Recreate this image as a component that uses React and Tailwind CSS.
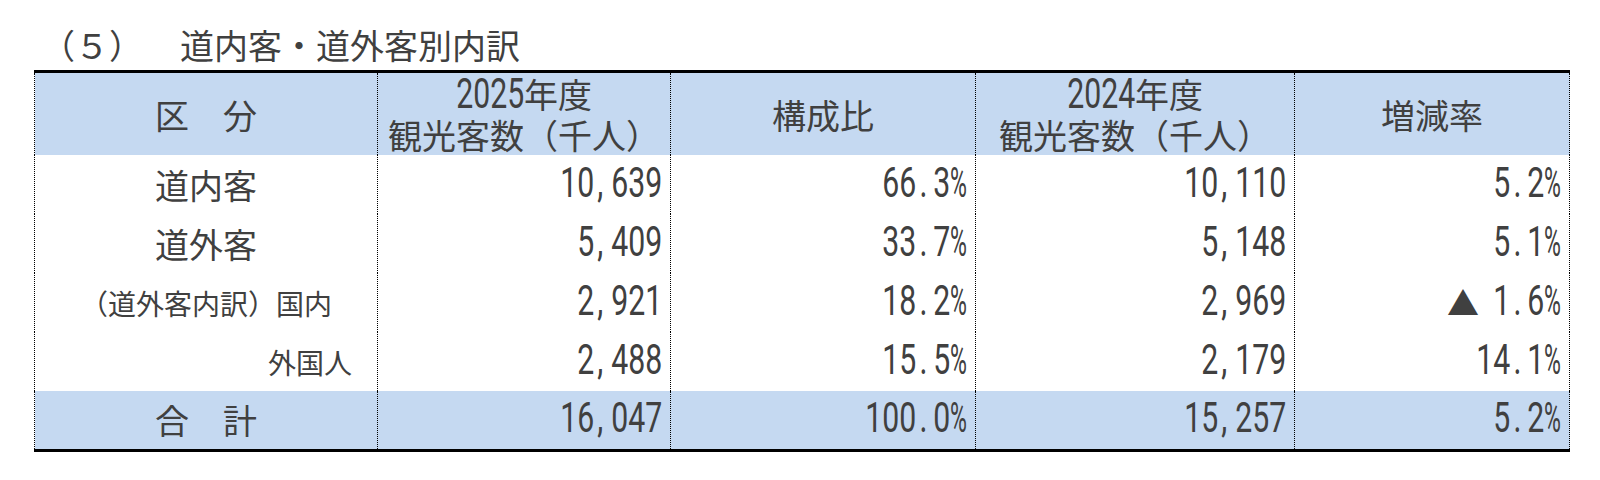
import React from "react";

const rows = [
  { label: "道内客", kind: "main", values: ["10,639", "66.3%", "10,110", "5.2%"] },
  { label: "道外客", kind: "main", values: ["5,409", "33.7%", "5,148", "5.1%"] },
  { label: "（道外客内訳）国内", kind: "sub", values: ["2,921", "18.2%", "2,969", "▲1.6%"] },
  { label: "外国人", kind: "subRight", values: ["2,488", "15.5%", "2,179", "14.1%"] },
];

const total = ["16,047", "100.0%", "15,257", "5.2%"];

// condensed monospace digits, each char gets its own 17px cell
function Num({ value }) {
  return (
    <span className="inline-flex font-['Roboto',sans-serif] text-[42px] leading-[30px]">
      {value.split("").map((c, i) => {
        if (c === "," || c === ".") {
          return (
            <span key={i} className="inline-flex w-[17px] justify-start pl-[2px]">
              <span className="inline-block scale-x-[0.72]">{c}</span>
            </span>
          );
        }
        return (
          <span key={i} className="inline-flex w-[17px] justify-center">
            <span className={c === "%" ? "inline-block scale-x-[0.55]" : "inline-block scale-x-[0.72]"}>{c}</span>
          </span>
        );
      })}
    </span>
  );
}

function Value({ value }) {
  if (value.startsWith("▲")) {
    return (
      <span className="inline-flex items-center">
        <span className="text-[32px] leading-[30px] mr-[14px]">▲</span>
        <Num value={value.slice(1)} />
      </span>
    );
  }
  return <Num value={value} />;
}

const cell = "border-x border-dotted border-black";

export default function App() {
  return (
    <div className="w-[1600px] h-[480px] bg-white pl-[34px] pr-[31px] font-['Noto_Sans_CJK_JP',sans-serif] text-[#404040]">

      <div className="h-[70px] pt-[26px] pl-[7px] text-[34px] leading-[38px] whitespace-nowrap">
        <span>（５）</span>
        <span className="ml-[37px]">道内客・道外客別内訳</span>
      </div>

      <table className="w-[1535px] table-fixed border-collapse border-y-[3px] border-black">
        <colgroup>
          <col className="w-[343px]" />
          <col className="w-[293px]" />
          <col className="w-[305px]" />
          <col className="w-[319px]" />
          <col className="w-[275px]" />
        </colgroup>

        <thead>
          <tr className="h-[82px] bg-[#c5d9f1] text-[34px] leading-[41px]">
            <th className={`${cell} font-normal`}>区　分</th>
            <th className={`${cell} font-normal`}>
              <div><Num value="2025" />年度</div>
              <div>観光客数（千人）</div>
            </th>
            <th className={`${cell} font-normal`}>構成比</th>
            <th className={`${cell} font-normal`}>
              <div><Num value="2024" />年度</div>
              <div>観光客数（千人）</div>
            </th>
            <th className={`${cell} font-normal`}>増減率</th>
          </tr>
        </thead>

        <tbody>
          {rows.map((row) => (
            <tr key={row.label} className="h-[59px]">
              <td
                className={
                  row.kind === "main"
                    ? `${cell} text-center text-[34px]`
                    : row.kind === "sub"
                    ? `${cell} text-center text-[28px]`
                    : `${cell} text-right pr-[25px] text-[28px]`
                }
              >
                {row.label}
              </td>
              {row.values.map((v, i) => (
                <td key={i} className={`${cell} text-right pr-[8px]`}>
                  <Value value={v} />
                </td>
              ))}
            </tr>
          ))}

          <tr className="h-[59px] bg-[#c5d9f1]">
            <td className={`${cell} text-center text-[34px]`}>合　計</td>
            {total.map((v, i) => (
              <td key={i} className={`${cell} text-right pr-[8px]`}>
                <Value value={v} />
              </td>
            ))}
          </tr>
        </tbody>
      </table>

    </div>
  );
}
